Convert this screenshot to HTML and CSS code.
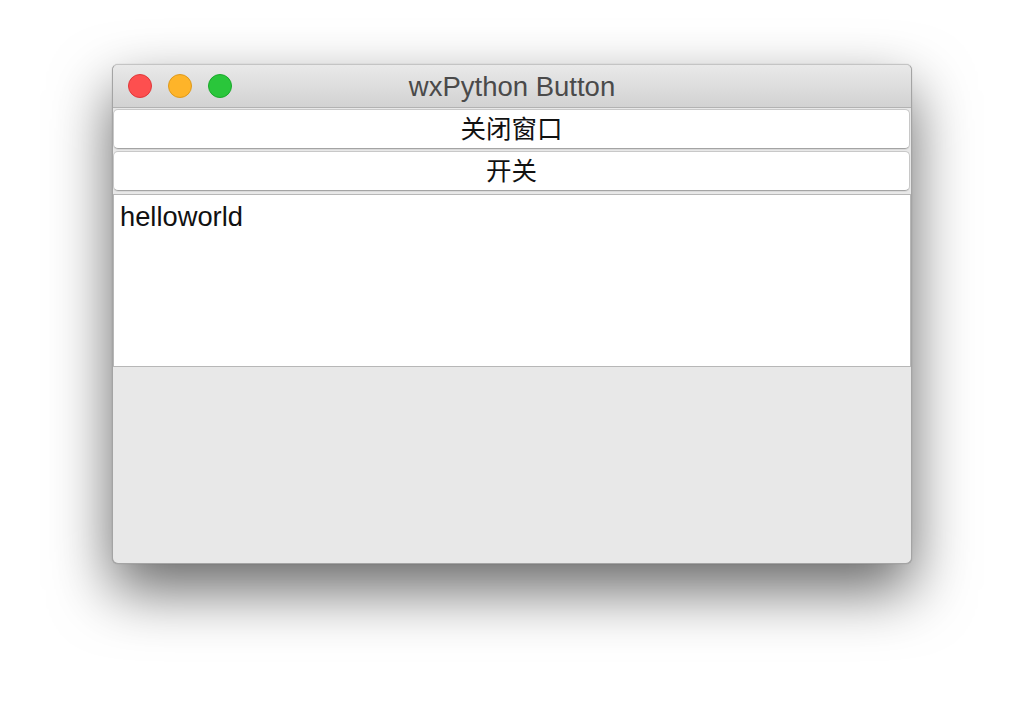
FILE: index.html
```html
<!DOCTYPE html>
<html>
<head>
<meta charset="utf-8">
<link rel="stylesheet" href="styles.css">
</head>
<body>
<div class="window">
  <div class="titlebar">
    <div class="lights">
      <span class="light red"></span>
      <span class="light yellow"></span>
      <span class="light green"></span>
    </div>
    <div class="title">wxPython Button</div>
  </div>
  <div class="content">
    <button class="btn">关闭窗口</button>
    <button class="btn">开关</button>
    <div class="textbox">helloworld</div>
  </div>
</div>
</body>
</html>
```
FILE: styles.css
```css
html, body {
  margin: 0;
  padding: 0;
  background: #ffffff;
  height: 100%;
  overflow: hidden;
}
body {
  display: flex;
  justify-content: center;
  align-items: flex-start;
}
.window {
  box-sizing: border-box;
  margin-top: 64px;
  width: 800px;
  height: 500px;
  background: #e8e8e8;
  border: 1px solid #a4a4a4;
  border-top-color: #c4c4c4;
  border-radius: 6px;
  box-shadow: 0 26px 60px rgba(0, 0, 0, 0.6), 0 0 1px rgba(0,0,0,0.3);
  display: flex;
  flex-direction: column;
  overflow: hidden;
  font-family: "Liberation Sans", Arial, "Noto Sans CJK SC", sans-serif;
}
.titlebar {
  height: 42px;
  flex: none;
  background: linear-gradient(#e9e9e9, #d2d2d2);
  border-bottom: 1px solid #b2b2b2;
  position: relative;
  display: flex;
  align-items: center;
  justify-content: center;
}
.lights {
  position: absolute;
  left: 15px;
  top: 9px;
  display: flex;
  gap: 16px;
}
.light {
  width: 22px;
  height: 22px;
  border-radius: 50%;
  display: block;
}
.red { background: #fd4f4f; border: 1px solid #e0383a; }
.yellow { background: #feb429; border: 1px solid #de9a1c; }
.green { background: #2ac63b; border: 1px solid #1aa92b; }
.title {
  font-size: 27.5px;
  color: #4a4a4a;
  margin-top: 2px;
}
.content {
  flex: 1;
  display: flex;
  flex-direction: column;
  padding: 1px 0 0 0;
  gap: 2px;
}
.btn {
  box-sizing: border-box;
  margin: 0 1px 0 0;
  height: 40px;
  background: #ffffff;
  border: 1px solid #c8c8c8;
  border-bottom-color: #a4a4a4;
  border-radius: 5px;
  box-shadow: 0 1px 0 rgba(0, 0, 0, 0.06);
  font-family: "Liberation Sans", "Noto Sans CJK SC", sans-serif;
  font-size: 25.5px;
  color: #111;
  padding: 0;
  line-height: 36px;
}
.textbox {
  box-sizing: border-box;
  margin-top: 1px;
  height: 173px;
  background: #ffffff;
  border: 1px solid #b7b7b7;
  padding: 5px 6px 3px;
  font-size: 27.3px;
  line-height: 34px;
  color: #111;
}
```
